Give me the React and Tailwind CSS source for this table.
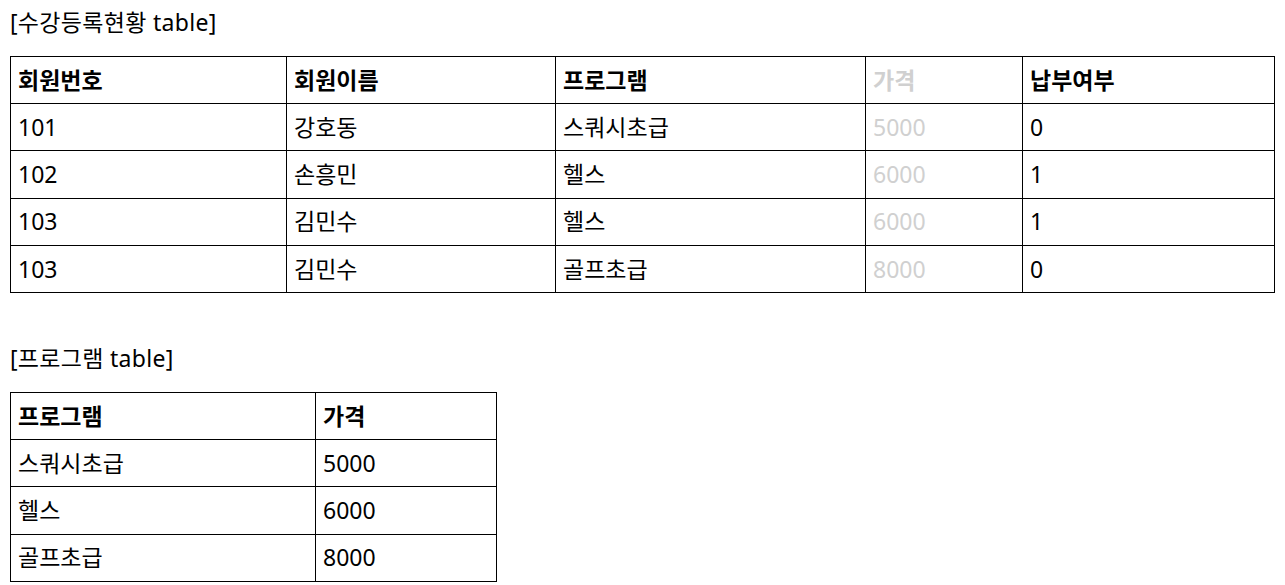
const FONT = { fontFamily: "'Noto Sans', 'Noto Sans CJK KR', sans-serif" };

const ENROLL = [
  ["101", "강호동", "스쿼시초급", "5000", "0"],
  ["102", "손흥민", "헬스", "6000", "1"],
  ["103", "김민수", "헬스", "6000", "1"],
  ["103", "김민수", "골프초급", "8000", "0"],
];

const PROGRAMS = [
  ["스쿼시초급", "5000"],
  ["헬스", "6000"],
  ["골프초급", "8000"],
];

const cell = "border border-black px-[7px] align-middle text-left";

export default function App() {
  return (
    <div className="bg-white text-black px-[10px] pt-[6px] text-[23px] min-h-[585px]" style={FONT}>
      <p className="leading-[32px] mb-[18px] tracking-[0.3px]">[수강등록현황 table]</p>
      <table className="border-collapse w-[1264px] table-fixed">
        <colgroup>
          <col className="w-[276px]" />
          <col className="w-[269px]" />
          <col className="w-[310px]" />
          <col className="w-[157px]" />
          <col className="w-[252px]" />
        </colgroup>
        <thead>
          <tr className="h-[47.2px]">
            <th className={`${cell} font-bold`}>회원번호</th>
            <th className={`${cell} font-bold`}>회원이름</th>
            <th className={`${cell} font-bold`}>프로그램</th>
            <th className={`${cell} font-bold text-[#d0d0d0]`}>가격</th>
            <th className={`${cell} font-bold`}>납부여부</th>
          </tr>
        </thead>
        <tbody>
          {ENROLL.map((r, i) => (
            <tr key={i} className="h-[47.2px]">
              <td className={cell}>{r[0]}</td>
              <td className={cell}>{r[1]}</td>
              <td className={cell}>{r[2]}</td>
              <td className={`${cell} text-[#d0d0d0]`}>{r[3]}</td>
              <td className={cell}>{r[4]}</td>
            </tr>
          ))}
        </tbody>
      </table>

      <p className="leading-[32px] mt-[49px] mb-[18px] tracking-[0.3px]">[프로그램 table]</p>
      <table className="border-collapse w-[486px] table-fixed">
        <colgroup>
          <col className="w-[305px]" />
          <col className="w-[181px]" />
        </colgroup>
        <thead>
          <tr className="h-[47.2px]">
            <th className={`${cell} font-bold`}>프로그램</th>
            <th className={`${cell} font-bold`}>가격</th>
          </tr>
        </thead>
        <tbody>
          {PROGRAMS.map((r, i) => (
            <tr key={i} className="h-[47.2px]">
              <td className={cell}>{r[0]}</td>
              <td className={cell}>{r[1]}</td>
            </tr>
          ))}
        </tbody>
      </table>
    </div>
  );
}
